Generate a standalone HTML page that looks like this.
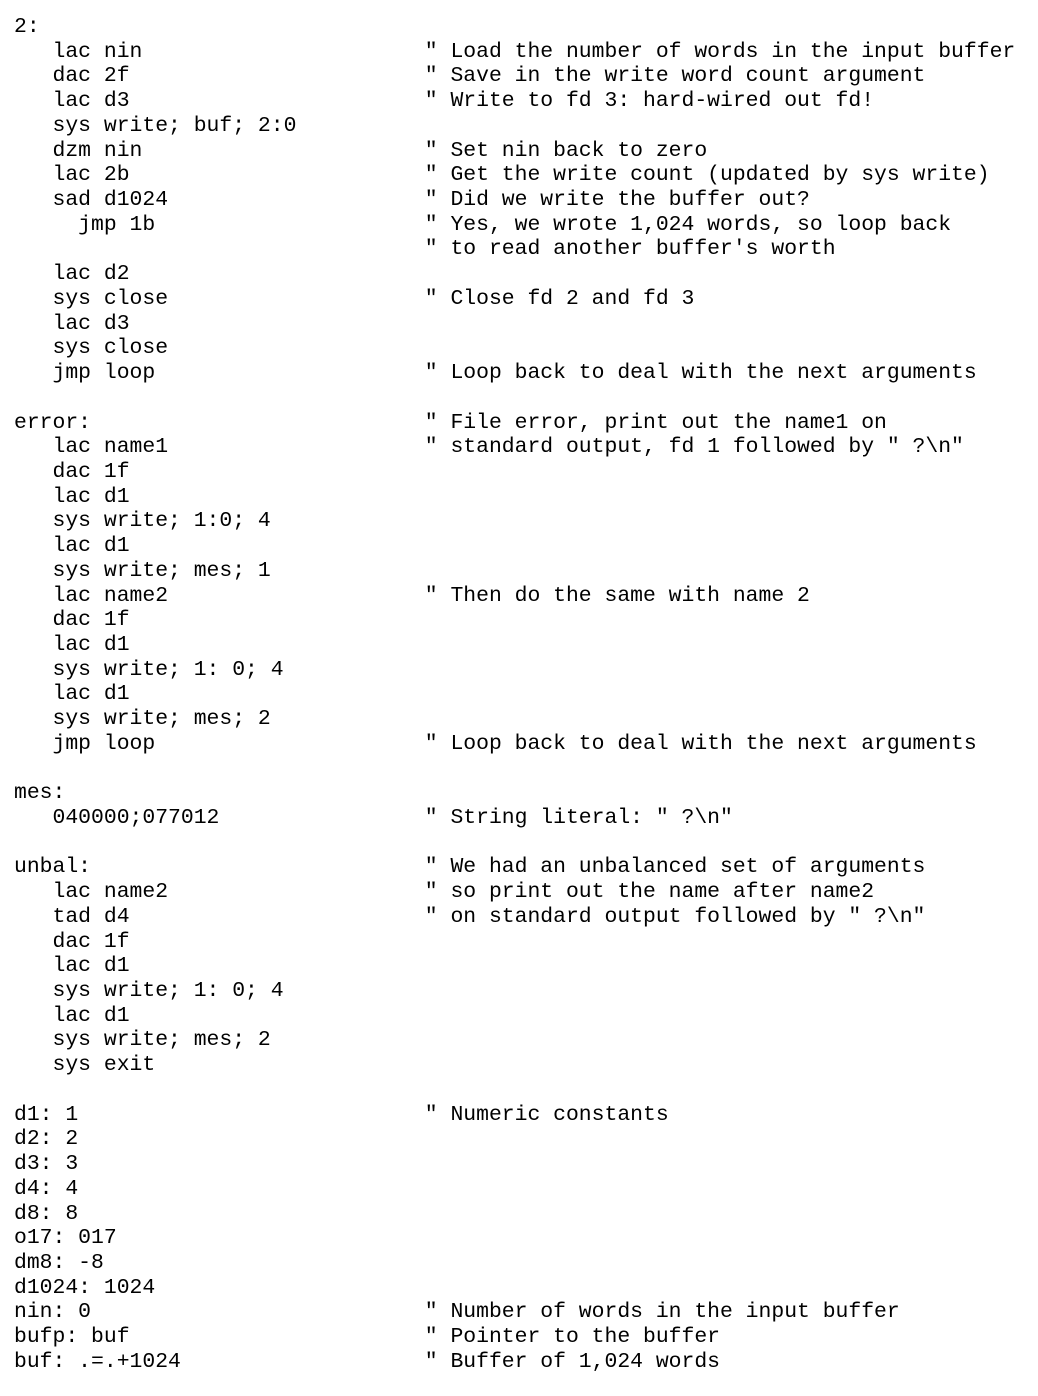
<!DOCTYPE html>
<html><head><meta charset="utf-8"><style>
html,body{margin:0;padding:0;background:#fff;width:1038px;height:1396px;overflow:hidden}
pre{margin:0;position:absolute;left:14px;top:15px;font-family:"Liberation Mono",monospace;font-size:21.4px;line-height:24.72px;color:#000}
</style></head><body><pre>2:
   lac nin                      " Load the number of words in the input buffer
   dac 2f                       " Save in the write word count argument
   lac d3                       " Write to fd 3: hard-wired out fd!
   sys write; buf; 2:0
   dzm nin                      " Set nin back to zero
   lac 2b                       " Get the write count (updated by sys write)
   sad d1024                    " Did we write the buffer out?
     jmp 1b                     " Yes, we wrote 1,024 words, so loop back
                                " to read another buffer's worth
   lac d2
   sys close                    " Close fd 2 and fd 3
   lac d3
   sys close
   jmp loop                     " Loop back to deal with the next arguments

error:                          " File error, print out the name1 on
   lac name1                    " standard output, fd 1 followed by " ?\n"
   dac 1f
   lac d1
   sys write; 1:0; 4
   lac d1
   sys write; mes; 1
   lac name2                    " Then do the same with name 2
   dac 1f
   lac d1
   sys write; 1: 0; 4
   lac d1
   sys write; mes; 2
   jmp loop                     " Loop back to deal with the next arguments

mes:
   040000;077012                " String literal: " ?\n"

unbal:                          " We had an unbalanced set of arguments
   lac name2                    " so print out the name after name2
   tad d4                       " on standard output followed by " ?\n"
   dac 1f
   lac d1
   sys write; 1: 0; 4
   lac d1
   sys write; mes; 2
   sys exit

d1: 1                           " Numeric constants
d2: 2
d3: 3
d4: 4
d8: 8
o17: 017
dm8: -8
d1024: 1024
nin: 0                          " Number of words in the input buffer
bufp: buf                       " Pointer to the buffer
buf: .=.+1024                   " Buffer of 1,024 words
</pre></body></html>
